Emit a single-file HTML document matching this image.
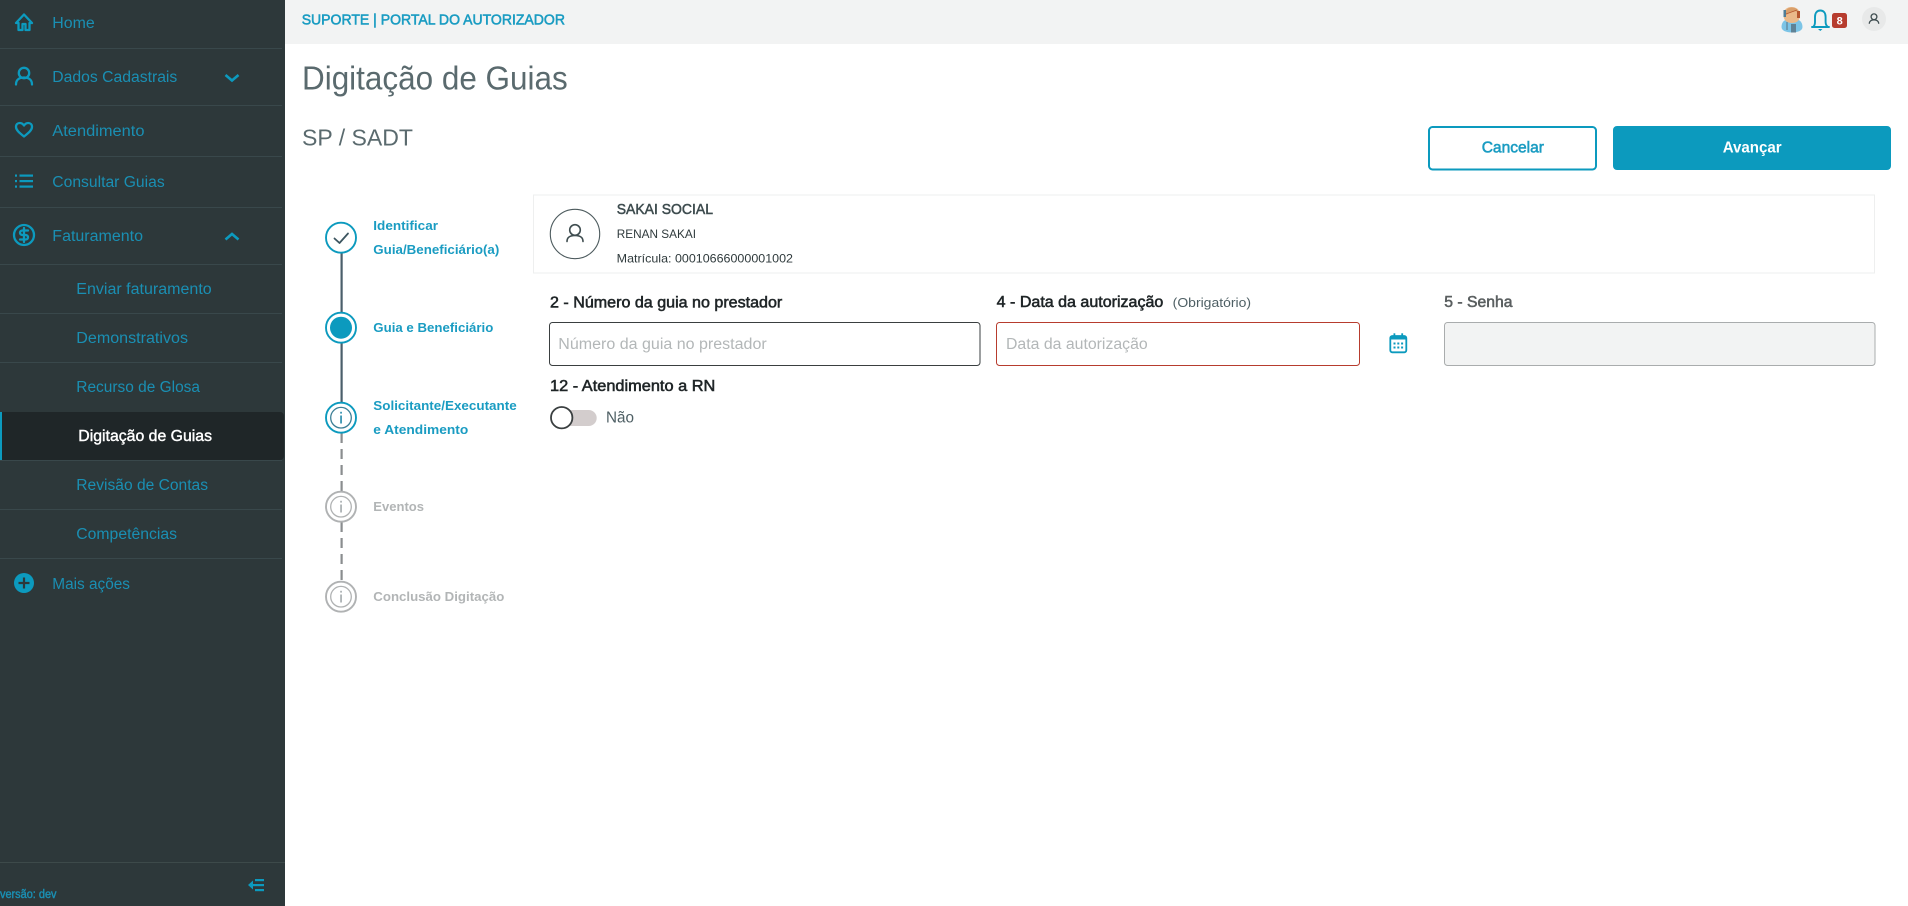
<!DOCTYPE html>
<html lang="pt-BR">
<head>
<meta charset="utf-8">
<title>Digitação de Guias</title>
<style>
html,body{margin:0;padding:0;background:#fff;width:1908px;height:906px;overflow:hidden}
svg{display:block}
text{font-family:"Liberation Sans",sans-serif;white-space:pre}
.nav{font-size:15.5px;fill:#1a8fb3}
.sub{font-size:15.5px;fill:#1a8fb3}
.step{font-size:13px;font-weight:700;fill:#1a9cc2}
.off{font-size:13px;font-weight:700;fill:#b2b5b6}
.lbl{font-size:15.5px;fill:#1f2527;stroke:#1f2527;stroke-width:.55}
.ph{font-size:15.5px;fill:#b3b7b8}
.ic{fill:none;stroke:#0c9abe;stroke-width:2.3;stroke-linecap:round;stroke-linejoin:round}
</style>
</head>
<body>
<svg width="1908" height="906" viewBox="0 0 1908 906" xmlns="http://www.w3.org/2000/svg">
<!-- sidebar -->
<rect x="0" y="0" width="285" height="906" fill="#2d383a"/>
<g fill="#39484b">
<rect x="0" y="48" width="282" height="1"/><rect x="0" y="105" width="282" height="1"/>
<rect x="0" y="156" width="282" height="1"/><rect x="0" y="207" width="282" height="1"/>
<rect x="0" y="264" width="282" height="1"/><rect x="0" y="313" width="282" height="1"/>
<rect x="0" y="362" width="282" height="1"/><rect x="0" y="460" width="282" height="1"/>
<rect x="0" y="509" width="282" height="1"/><rect x="0" y="558" width="282" height="1"/>
</g>
<rect x="0" y="862" width="285" height="1" fill="#3d4a4a"/>
<path d="M0 412H280a4 4 0 0 1 4 4V456a4 4 0 0 1-4 4H0Z" fill="#1f2628"/>
<rect x="0" y="412" width="2" height="48" fill="#0c9abe"/>

<!-- sidebar icons -->
<path class="ic" d="M16 23 24 14.5 32 23H29.5V30H25.5V24H22.5V30H18.5V23Z"/>
<circle class="ic" cx="24" cy="73" r="5.2"/>
<path class="ic" d="M16 84.5C16 79.5 19.5 77.5 24 77.5S32 79.5 32 84.5"/>
<path class="ic" d="M24 136.5C19 132.5 16 130 16 126.8 16 124.4 17.8 123 19.8 123 21.5 123 23 124 24 125.5 25 124 26.5 123 28.2 123 30.2 123 32 124.4 32 126.8 32 130 29 132.5 24 136.5Z"/>
<g fill="#0c9abe">
<rect x="19.5" y="174.5" width="13.5" height="2.2"/><rect x="19.5" y="180" width="13.5" height="2.2"/><rect x="19.5" y="185.5" width="13.5" height="2.2"/>
<rect x="15" y="174.5" width="2" height="2.2"/><rect x="15" y="180" width="2" height="2.2"/><rect x="15" y="185.5" width="2" height="2.2"/>
</g>
<circle class="ic" cx="24" cy="235" r="10"/>
<path class="ic" d="M28 230.5H22.5C20.8 230.5 20 231.6 20 232.8 20 234 20.8 235 22.5 235H25.5C27.2 235 28 236 28 237.2 28 238.4 27.2 239.5 25.5 239.5H20M24 228V242"/>
<path d="M225.5 75 232 80.5 238.5 75" fill="none" stroke="#0c9abe" stroke-width="2.6"/>
<path d="M225.5 239.5 232 234 238.5 239.5" fill="none" stroke="#0c9abe" stroke-width="2.6"/>
<circle cx="24" cy="583" r="10" fill="#0c9abe"/>
<path d="M24 577.5V588.5M18.5 583H29.5" stroke="#2d383a" stroke-width="2.2"/>
<g fill="#0c9abe">
<rect x="255" y="879" width="9" height="2.2"/><rect x="255" y="884" width="9" height="2.2"/><rect x="255" y="889" width="9" height="2.2"/>
<path d="M248 885 253 880.5V889.5Z"/><rect x="250" y="884" width="5" height="2.2"/>
</g>

<!-- sidebar text -->
<text class="nav" x="52.3" y="28" textLength="42.5" lengthAdjust="spacingAndGlyphs">Home</text>
<text class="nav" x="52.3" y="82" textLength="125" lengthAdjust="spacingAndGlyphs">Dados Cadastrais</text>
<text class="nav" x="52.3" y="136" textLength="92.2" lengthAdjust="spacingAndGlyphs">Atendimento</text>
<text class="nav" x="52.3" y="187" textLength="112.4" lengthAdjust="spacingAndGlyphs">Consultar Guias</text>
<text class="nav" x="52.3" y="241" textLength="90.7" lengthAdjust="spacingAndGlyphs">Faturamento</text>
<text class="sub" x="76.3" y="294" textLength="135.4" lengthAdjust="spacingAndGlyphs">Enviar faturamento</text>
<text class="sub" x="76.3" y="343" textLength="111.7" lengthAdjust="spacingAndGlyphs">Demonstrativos</text>
<text class="sub" x="76.3" y="392" textLength="123.7" lengthAdjust="spacingAndGlyphs">Recurso de Glosa</text>
<text x="78.3" y="441" font-size="15.5" fill="#fff" stroke="#fff" stroke-width=".4" textLength="133.7" lengthAdjust="spacingAndGlyphs">Digitação de Guias</text>
<text class="sub" x="76.3" y="490" textLength="131.7" lengthAdjust="spacingAndGlyphs">Revisão de Contas</text>
<text class="sub" x="76.3" y="539" textLength="100.7" lengthAdjust="spacingAndGlyphs">Competências</text>
<text class="nav" x="52.3" y="589" textLength="77.7" lengthAdjust="spacingAndGlyphs">Mais ações</text>
<text x="0" y="898" font-size="11.5" fill="#1a8fb3" stroke="#1a8fb3" stroke-width=".4" textLength="56.5" lengthAdjust="spacingAndGlyphs">versão: dev</text>

<!-- header -->
<rect x="285" y="0" width="1623" height="44" fill="#f2f3f3"/>
<text x="301.7" y="24.3" font-size="14.5" fill="#1a9cc2" stroke="#1a9cc2" stroke-width=".55" textLength="263.3" lengthAdjust="spacingAndGlyphs">SUPORTE | PORTAL DO AUTORIZADOR</text>

<!-- header avatar -->
<path d="M1781.5 27C1781.5 21 1786 18.5 1792 18.5S1802.5 21 1802.5 27C1802.5 30.5 1798 32.5 1792 32.5S1781.5 30.5 1781.5 27Z" fill="#7cc4e6"/>
<path d="M1783.5 15C1783.5 9 1787.5 7 1791.5 7S1800 9 1800 15 1796.5 23 1792 23 1783.5 21 1783.5 15Z" fill="#eab98a"/>
<path d="M1785 13C1786 9 1789 7.5 1792 7.5S1798 9 1799 13L1795 11C1792 13 1788 11 1787 15Z" fill="#d99f6a"/>
<rect x="1797" y="11" width="3" height="7" fill="#b5562f"/>
<rect x="1783.5" y="10" width="2.5" height="7" fill="#4f7d96"/>
<path d="M1786 14 1797 10" stroke="#b5562f" stroke-width=".8"/>
<rect x="1791" y="24" width="5" height="8.5" fill="#5f8296"/>
<rect x="1786" y="22" width="2" height="8" fill="#5f8296" opacity=".6"/>
<!-- bell -->
<path d="M1813.5 26.5C1815 25 1815 23.5 1815 22V17C1815 13 1817 10.5 1820.3 10.5S1825.6 13 1825.6 17V22C1825.6 23.5 1825.6 25 1827.5 26.5M1812 27H1829" fill="none" stroke="#0c9abe" stroke-width="1.9" stroke-linecap="round"/>
<path d="M1818 29H1822.5L1820.3 31Z" fill="#0c9abe"/>
<rect x="1832" y="13" width="15" height="15" rx="2.5" fill="#b73c2e"/>
<text x="1836.6" y="24.5" font-size="11" font-weight="700" fill="#fff">8</text>
<!-- user button -->
<circle cx="1874" cy="19" r="12" fill="#e8e9e9"/>
<circle cx="1874" cy="16.8" r="2.9" fill="none" stroke="#3f4d50" stroke-width="1.3"/>
<path d="M1869.3 23.8C1869.3 21 1871.5 19.8 1874 19.8S1878.7 21 1878.7 23.8" fill="none" stroke="#3f4d50" stroke-width="1.3"/>

<!-- title -->
<text x="302" y="89.3" font-size="33" fill="#5a6a6e" textLength="265.7" lengthAdjust="spacingAndGlyphs">Digitação de Guias</text>
<text x="302" y="145.7" font-size="23" fill="#5a6a6e" textLength="111" lengthAdjust="spacingAndGlyphs">SP / SADT</text>

<!-- buttons -->
<rect x="1429" y="127" width="167" height="42.5" rx="3.5" fill="#fff" stroke="#0c9abe" stroke-width="2"/>
<text x="1481.7" y="152.7" font-size="15.5" fill="#1a9cc2" stroke="#1a9cc2" stroke-width=".55" textLength="62.3" lengthAdjust="spacingAndGlyphs">Cancelar</text>
<rect x="1613" y="126" width="278" height="44" rx="4" fill="#0c9abe"/>
<text x="1722.7" y="152.7" font-size="15.5" font-weight="700" fill="#fff" textLength="59" lengthAdjust="spacingAndGlyphs">Avançar</text>

<!-- stepper lines -->
<rect x="340.5" y="253" width="2.2" height="59" fill="#4b5f6b"/>
<rect x="340.5" y="343" width="2.2" height="59" fill="#4b5f6b"/>
<path d="M341.6 433V491" stroke="#8a8d8f" stroke-width="2.2" stroke-dasharray="10 6" fill="none"/>
<path d="M341.6 522V581" stroke="#8a8d8f" stroke-width="2.2" stroke-dasharray="10 6" fill="none"/>

<!-- step 1 -->
<circle cx="341" cy="237.7" r="15" fill="#fff" stroke="#0c9abe" stroke-width="1.9"/>
<path d="M334.5 238.5 339.5 243 348 233.5" fill="none" stroke="#3c5560" stroke-width="1.8" stroke-linecap="round" stroke-linejoin="round"/>
<!-- step 2 -->
<circle cx="341" cy="327.7" r="15" fill="#fff" stroke="#0c9abe" stroke-width="1.9"/>
<circle cx="341" cy="327.7" r="11" fill="#0c9abe"/>
<!-- step 3 -->
<circle cx="341" cy="417.7" r="15" fill="#fff" stroke="#0c9abe" stroke-width="1.9"/>
<circle cx="341" cy="417.7" r="10.3" fill="none" stroke="#3d7f96" stroke-width="1.3"/>
<rect x="340.2" y="415.5" width="1.7" height="8" fill="#2f8fae"/><rect x="340.2" y="411.8" width="1.7" height="1.8" fill="#2f8fae"/>
<!-- step 4 -->
<circle cx="341" cy="506.7" r="15" fill="#fff" stroke="#b0b2b3" stroke-width="1.9"/>
<circle cx="341" cy="506.7" r="10.3" fill="none" stroke="#b0b2b3" stroke-width="1.3"/>
<rect x="340.2" y="504.5" width="1.7" height="8" fill="#a8aeb0"/><rect x="340.2" y="500.8" width="1.7" height="1.8" fill="#a8aeb0"/>
<!-- step 5 -->
<circle cx="341" cy="596.7" r="15" fill="#fff" stroke="#b0b2b3" stroke-width="1.9"/>
<circle cx="341" cy="596.7" r="10.3" fill="none" stroke="#b0b2b3" stroke-width="1.3"/>
<rect x="340.2" y="594.5" width="1.7" height="8" fill="#a8aeb0"/><rect x="340.2" y="590.8" width="1.7" height="1.8" fill="#a8aeb0"/>

<text class="step" x="373.3" y="230" textLength="64.7" lengthAdjust="spacingAndGlyphs">Identificar</text>
<text class="step" x="373.3" y="254" textLength="126" lengthAdjust="spacingAndGlyphs">Guia/Beneficiário(a)</text>
<text class="step" x="373.3" y="332" textLength="120" lengthAdjust="spacingAndGlyphs">Guia e Beneficiário</text>
<text class="step" x="373.3" y="410" textLength="143.4" lengthAdjust="spacingAndGlyphs">Solicitante/Executante</text>
<text class="step" x="373.3" y="434" textLength="95" lengthAdjust="spacingAndGlyphs">e Atendimento</text>
<text class="off" x="373.3" y="511" textLength="50.7" lengthAdjust="spacingAndGlyphs">Eventos</text>
<text class="off" x="373.3" y="601" textLength="131" lengthAdjust="spacingAndGlyphs">Conclusão Digitação</text>

<!-- card -->
<rect x="533.5" y="195" width="1341" height="78" fill="#fff" stroke="#eeefef" stroke-width="1"/>
<circle cx="575" cy="234" r="24.7" fill="#fff" stroke="#4c5a5d" stroke-width="1.1"/>
<circle cx="575" cy="230" r="5.3" fill="none" stroke="#3f4d50" stroke-width="1.6"/>
<path d="M567 241.5C567 237 570.5 235.5 575 235.5S583 237 583 241.5" fill="none" stroke="#3f4d50" stroke-width="1.6" stroke-linecap="round"/>
<text x="616.7" y="214" font-size="14.5" fill="#3e4c4f" stroke="#3e4c4f" stroke-width=".5" textLength="96.3" lengthAdjust="spacingAndGlyphs">SAKAI SOCIAL</text>
<text x="616.7" y="238" font-size="12" fill="#2f3a3c" textLength="79.3" lengthAdjust="spacingAndGlyphs">RENAN SAKAI</text>
<text x="616.7" y="262.7" font-size="12" fill="#2f3a3c" textLength="176.3" lengthAdjust="spacingAndGlyphs">Matrícula: 00010666000001002</text>

<!-- field 2 -->
<text class="lbl" x="550" y="307.3" textLength="232.3" lengthAdjust="spacingAndGlyphs">2 - Número da guia no prestador</text>
<rect x="549.5" y="322.5" width="430.5" height="43" rx="3" fill="#fff" stroke="#3a3f40" stroke-width="1"/>
<text class="ph" x="558.3" y="349" textLength="208.4" lengthAdjust="spacingAndGlyphs">Número da guia no prestador</text>

<!-- field 4 -->
<text class="lbl" x="996.7" y="307" textLength="166.6" lengthAdjust="spacingAndGlyphs">4 - Data da autorização</text>
<text x="1172.7" y="307" font-size="13" fill="#4e5f64" textLength="78.3" lengthAdjust="spacingAndGlyphs">(Obrigatório)</text>
<rect x="996.5" y="322.5" width="363" height="43" rx="3" fill="#fff" stroke="#b73c2e" stroke-width="1"/>
<text class="ph" x="1006" y="349" textLength="141.7" lengthAdjust="spacingAndGlyphs">Data da autorização</text>
<!-- calendar -->
<rect x="1390.3" y="336" width="16" height="16.3" rx="2" fill="none" stroke="#0c9abe" stroke-width="1.8"/>
<rect x="1390.3" y="336" width="16" height="3.5" fill="#0c9abe"/>
<rect x="1393.5" y="333.3" width="1.8" height="3" fill="#0c9abe"/><rect x="1401.3" y="333.3" width="1.8" height="3" fill="#0c9abe"/>
<g fill="#0c9abe"><rect x="1393.5" y="342.5" width="2" height="2"/><rect x="1397.3" y="342.5" width="2" height="2"/><rect x="1401.1" y="342.5" width="2" height="2"/><rect x="1393.5" y="346.5" width="2" height="2"/><rect x="1397.3" y="346.5" width="2" height="2"/><rect x="1401.1" y="346.5" width="2" height="2"/></g>

<!-- field 5 -->
<text x="1444.3" y="307" font-size="15.5" fill="#5a5f60" stroke="#5a5f60" stroke-width=".55" textLength="68.2" lengthAdjust="spacingAndGlyphs">5 - Senha</text>
<rect x="1444.5" y="322.5" width="430.5" height="43" rx="3" fill="#f2f3f3" stroke="#a9acad" stroke-width="1"/>

<!-- field 12 -->
<text class="lbl" x="550" y="391" textLength="165.3" lengthAdjust="spacingAndGlyphs">12 - Atendimento a RN</text>
<rect x="556" y="410" width="40.7" height="16" rx="8" fill="#d3cdcd"/>
<circle cx="561.7" cy="417.7" r="10.7" fill="#fff" stroke="#3a3f40" stroke-width="1.8"/>
<text x="606" y="422.7" font-size="15.5" fill="#4e5f64" textLength="28" lengthAdjust="spacingAndGlyphs">Não</text>
</svg>
</body>
</html>
